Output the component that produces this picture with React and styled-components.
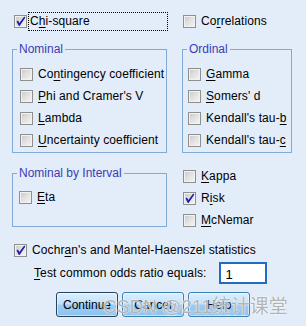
import React from "react";
import styled, { createGlobalStyle } from "styled-components";

const Global = createGlobalStyle`
  html, body { margin: 0; padding: 0; background: #e2edf9; }
  body { font-family: "Liberation Sans", Arial, sans-serif; font-size: 12px; color: #000; }
  * { box-sizing: border-box; }
`;

const Page = styled.div`
  position: relative;
  width: 306px;
  height: 326px;
  overflow: hidden;
  padding: 10px 0 0 12px;
  display: flex;
  flex-direction: column;
`;

const Grid = styled.div`
  display: grid;
  grid-template-columns: 155px 110px;
  column-gap: 15px;
  margin-top: ${(p) => p.$mt || 0}px;
  align-items: start;
`;

const Row = styled.label`
  display: flex;
  align-items: center;
  height: ${(p) => p.$h || 22}px;
  margin-left: ${(p) => p.$ml || 0}px;
  margin-top: ${(p) => p.$mt || 0}px;
  white-space: nowrap;
  line-height: 14px;
`;

const Box = styled.span`
  flex: none;
  width: 13px;
  height: 13px;
  border: 1px solid #8e8f8f;
  background: linear-gradient(135deg, #c6c6c6 0%, #e0e0e0 45%, #f6f6f6 100%);
  box-shadow: inset 0 0 0 1px #f2f2f2;
  margin-right: ${(p) => p.$gap || 4}px;
  display: flex;
  align-items: center;
  justify-content: center;
`;

const Text = styled.span`
  padding: 1px 1px;
  outline: ${(p) => (p.$focus ? "1px dotted #000" : "none")};
  width: ${(p) => (p.$w ? p.$w + "px" : "auto")};
  line-height: 15px;
  letter-spacing: 0.1px;
`;

const Key = styled.span`
  text-decoration: underline;
  text-decoration-thickness: 1px;
  text-underline-offset: 2px;
`;

const Group = styled.fieldset`
  margin: ${(p) => p.$mt || 0}px 0 0 0;
  border: 1px solid #80abd6;
  padding: ${(p) => p.$pt || 7}px 4px ${(p) => p.$pb || 1}px 4px;
  min-width: 0;
`;

const Legend = styled.legend`
  padding: 0 2px;
  color: #3c3cb4;
  font-size: 12px;
  line-height: 14px;
`;

const List = styled.div`
  display: flex;
  flex-direction: column;
  margin-left: ${(p) => p.$ml ?? 3}px;
`;

const Col = styled.div`
  display: flex;
  flex-direction: column;
`;

const OddsRow = styled.div`
  display: flex;
  align-items: center;
  height: 24px;
  margin-left: 21px;
`;

const Input = styled.div`
  width: 48px;
  height: 22px;
  margin-left: 12px;
  border: 2px solid #1f6cc4;
  background: #fff;
  padding: 3px 0 0 4px;
  font-size: 13px;
  line-height: 15px;
`;

const Buttons = styled.div`
  display: flex;
  justify-content: center;
  gap: 4px;
  margin: 7px 0 0 -12px;
`;

const Button = styled.button`
  width: 62px;
  height: 25px;
  border-radius: 3px;
  border: 1px solid ${(p) => (p.$default ? "#27445e" : "#3c7fb1")};
  background: linear-gradient(#dcefff 0%, #c0e0fb 48%, #9dcbf3 52%, #8cc2f0 100%);
  box-shadow: inset 0 0 0 1px rgba(255, 255, 255, 0.55);
  font-family: "Liberation Sans", Arial, sans-serif;
  font-size: 12px;
  color: #000;
  padding: 0;
`;

const Watermark = styled.div`
  position: absolute;
  left: 103px;
  top: 295px;
  font-family: "Liberation Sans", "Noto Sans CJK SC", sans-serif;
  font-size: 19px;
  line-height: 24px;
  color: rgba(155, 155, 155, 0.75);
  text-shadow: 0 0 1px #fff, 0 0 2px rgba(255, 255, 255, 0.9);
  white-space: nowrap;
  pointer-events: none;
`;

const Check = ({ checked, gap }) => (
  <Box $gap={gap}>
    {checked && (
      <svg width="11" height="11" viewBox="0 0 11 11">
        <path d="M1.5 5.5 L3 4.6 L4.4 7 L9.2 0.6 L10.4 1.4 L4.6 10 L3.8 10 Z" fill="#1e1eaa" />
      </svg>
    )}
  </Box>
);

const Item = ({ checked, pre, k, post, ml, gap, focus, w, h }) => (
  <Row $ml={ml} $h={h}>
    <Check checked={checked} gap={gap} />
    <Text $focus={focus} $w={w}>
      {pre}
      <Key>{k}</Key>
      {post}
    </Text>
  </Row>
);

export default function App() {
  return (
    <>
      <Global />
      <Page>
        <Grid>
          <Item checked ml={2} gap={2} pre="C" k="h" post="i-square" focus w={148} />
          <Item ml={1} pre="Co" k="r" post="relations" />
        </Grid>

        <Grid $mt={10}>
          <Group>
            <Legend>Nominal</Legend>
            <List>
              <Item pre="Co" k="n" post="tingency coefficient" />
              <Item pre="" k="P" post="hi and Cramer's V" />
              <Item pre="" k="L" post="ambda" />
              <Item pre="" k="U" post="ncertainty coefficient" />
            </List>
          </Group>
          <Group>
            <Legend>Ordinal</Legend>
            <List $ml={1}>
              <Item pre="" k="G" post="amma" />
              <Item pre="" k="S" post="omers' d" />
              <Item pre="Kendall's tau-" k="b" post="" />
              <Item pre="Kendall's tau-" k="c" post="" />
            </List>
          </Group>
        </Grid>

        <Grid $mt={12}>
          <Group $mt={1} $pt={6} $pb={18}>
            <Legend>Nominal by Interval</Legend>
            <List $ml={2}>
              <Item pre="" k="E" post="ta" />
            </List>
          </Group>
          <Col>
            <Item ml={1} pre="" k="K" post="appa" />
            <Item ml={1} checked pre="R" k="i" post="sk" />
            <Item ml={1} pre="" k="M" post="cNemar" />
          </Col>
        </Grid>

        <Row $ml={2} $mt={8}>
          <Check checked />
          <Text>
            Cochr<Key>a</Key>n's and Mantel-Haenszel statistics
          </Text>
        </Row>
        <OddsRow>
          <Text>
            <Key>T</Key>est common odds ratio equals:
          </Text>
          <Input>1</Input>
        </OddsRow>

        <Buttons>
          <Button $default>Continue</Button>
          <Button>Cancel</Button>
          <Button>Help</Button>
        </Buttons>

        <Watermark>CSDN @211统计课堂</Watermark>
      </Page>
    </>
  );
}
